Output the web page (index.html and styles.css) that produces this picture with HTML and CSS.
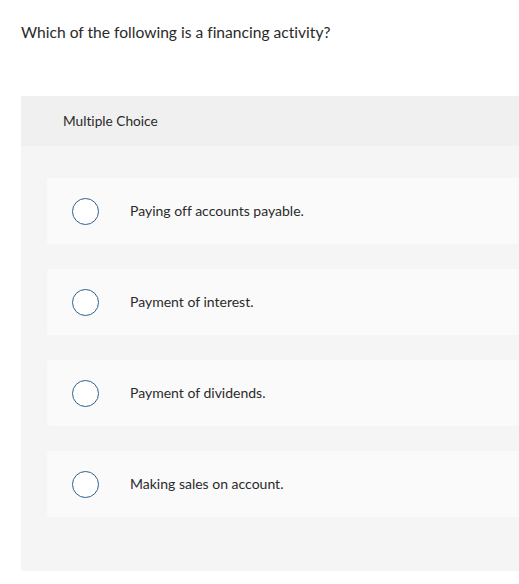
FILE: index.html
```html
<!DOCTYPE html>
<html lang="en">
<head>
<meta charset="utf-8">
<title>Multiple Choice</title>
<link rel="stylesheet" href="styles.css">
</head>
<body>
<main class="page">
  <p class="question">Which of the following is a financing activity?</p>
  <section class="panel">
    <header class="panel-head">Multiple Choice</header>
    <div class="options">
      <label class="option"><span class="radio"></span><span class="option-text">Paying off accounts payable.</span></label>
      <label class="option"><span class="radio"></span><span class="option-text">Payment of interest.</span></label>
      <label class="option"><span class="radio"></span><span class="option-text">Payment of dividends.</span></label>
      <label class="option"><span class="radio"></span><span class="option-text">Making sales on account.</span></label>
    </div>
  </section>
</main>
</body>
</html>
```
FILE: styles.css
```css
html, body {
  margin: 0;
  padding: 0;
  background: #ffffff;
}
body {
  font-family: Lato, "Open Sans", Arial, sans-serif;
  font-variant-ligatures: none;
  color: #2a2a2a;
}
.page {
  padding: 22px 0 0 21px;
}
.question {
  margin: 0;
  font-size: 15.6px;
  line-height: 20px;
}
.panel {
  margin-top: 54px;
  background: #f5f5f5;
  border-radius: 2px 0 0 2px;
}
.panel-head {
  height: 50px;
  display: flex;
  align-items: center;
  padding-left: 42px;
  padding-bottom: 1px;
  box-sizing: border-box;
  background: #f0f0f0;
  font-size: 13.7px;
}
.options {
  display: flex;
  flex-direction: column;
  gap: 25px;
  padding: 32px 0 54px 26px;
}
.option {
  height: 66px;
  display: flex;
  align-items: center;
  background: #fafafa;
  border-radius: 3px 0 0 3px;
  padding-left: 25px;
}
.radio {
  width: 25px;
  height: 25px;
  border: 1.5px solid #2f5f8f;
  border-radius: 50%;
  background: #ffffff;
  flex: none;
}
.option-text {
  margin-left: 31px;
  margin-bottom: 1px;
  font-size: 14px;
}
```
